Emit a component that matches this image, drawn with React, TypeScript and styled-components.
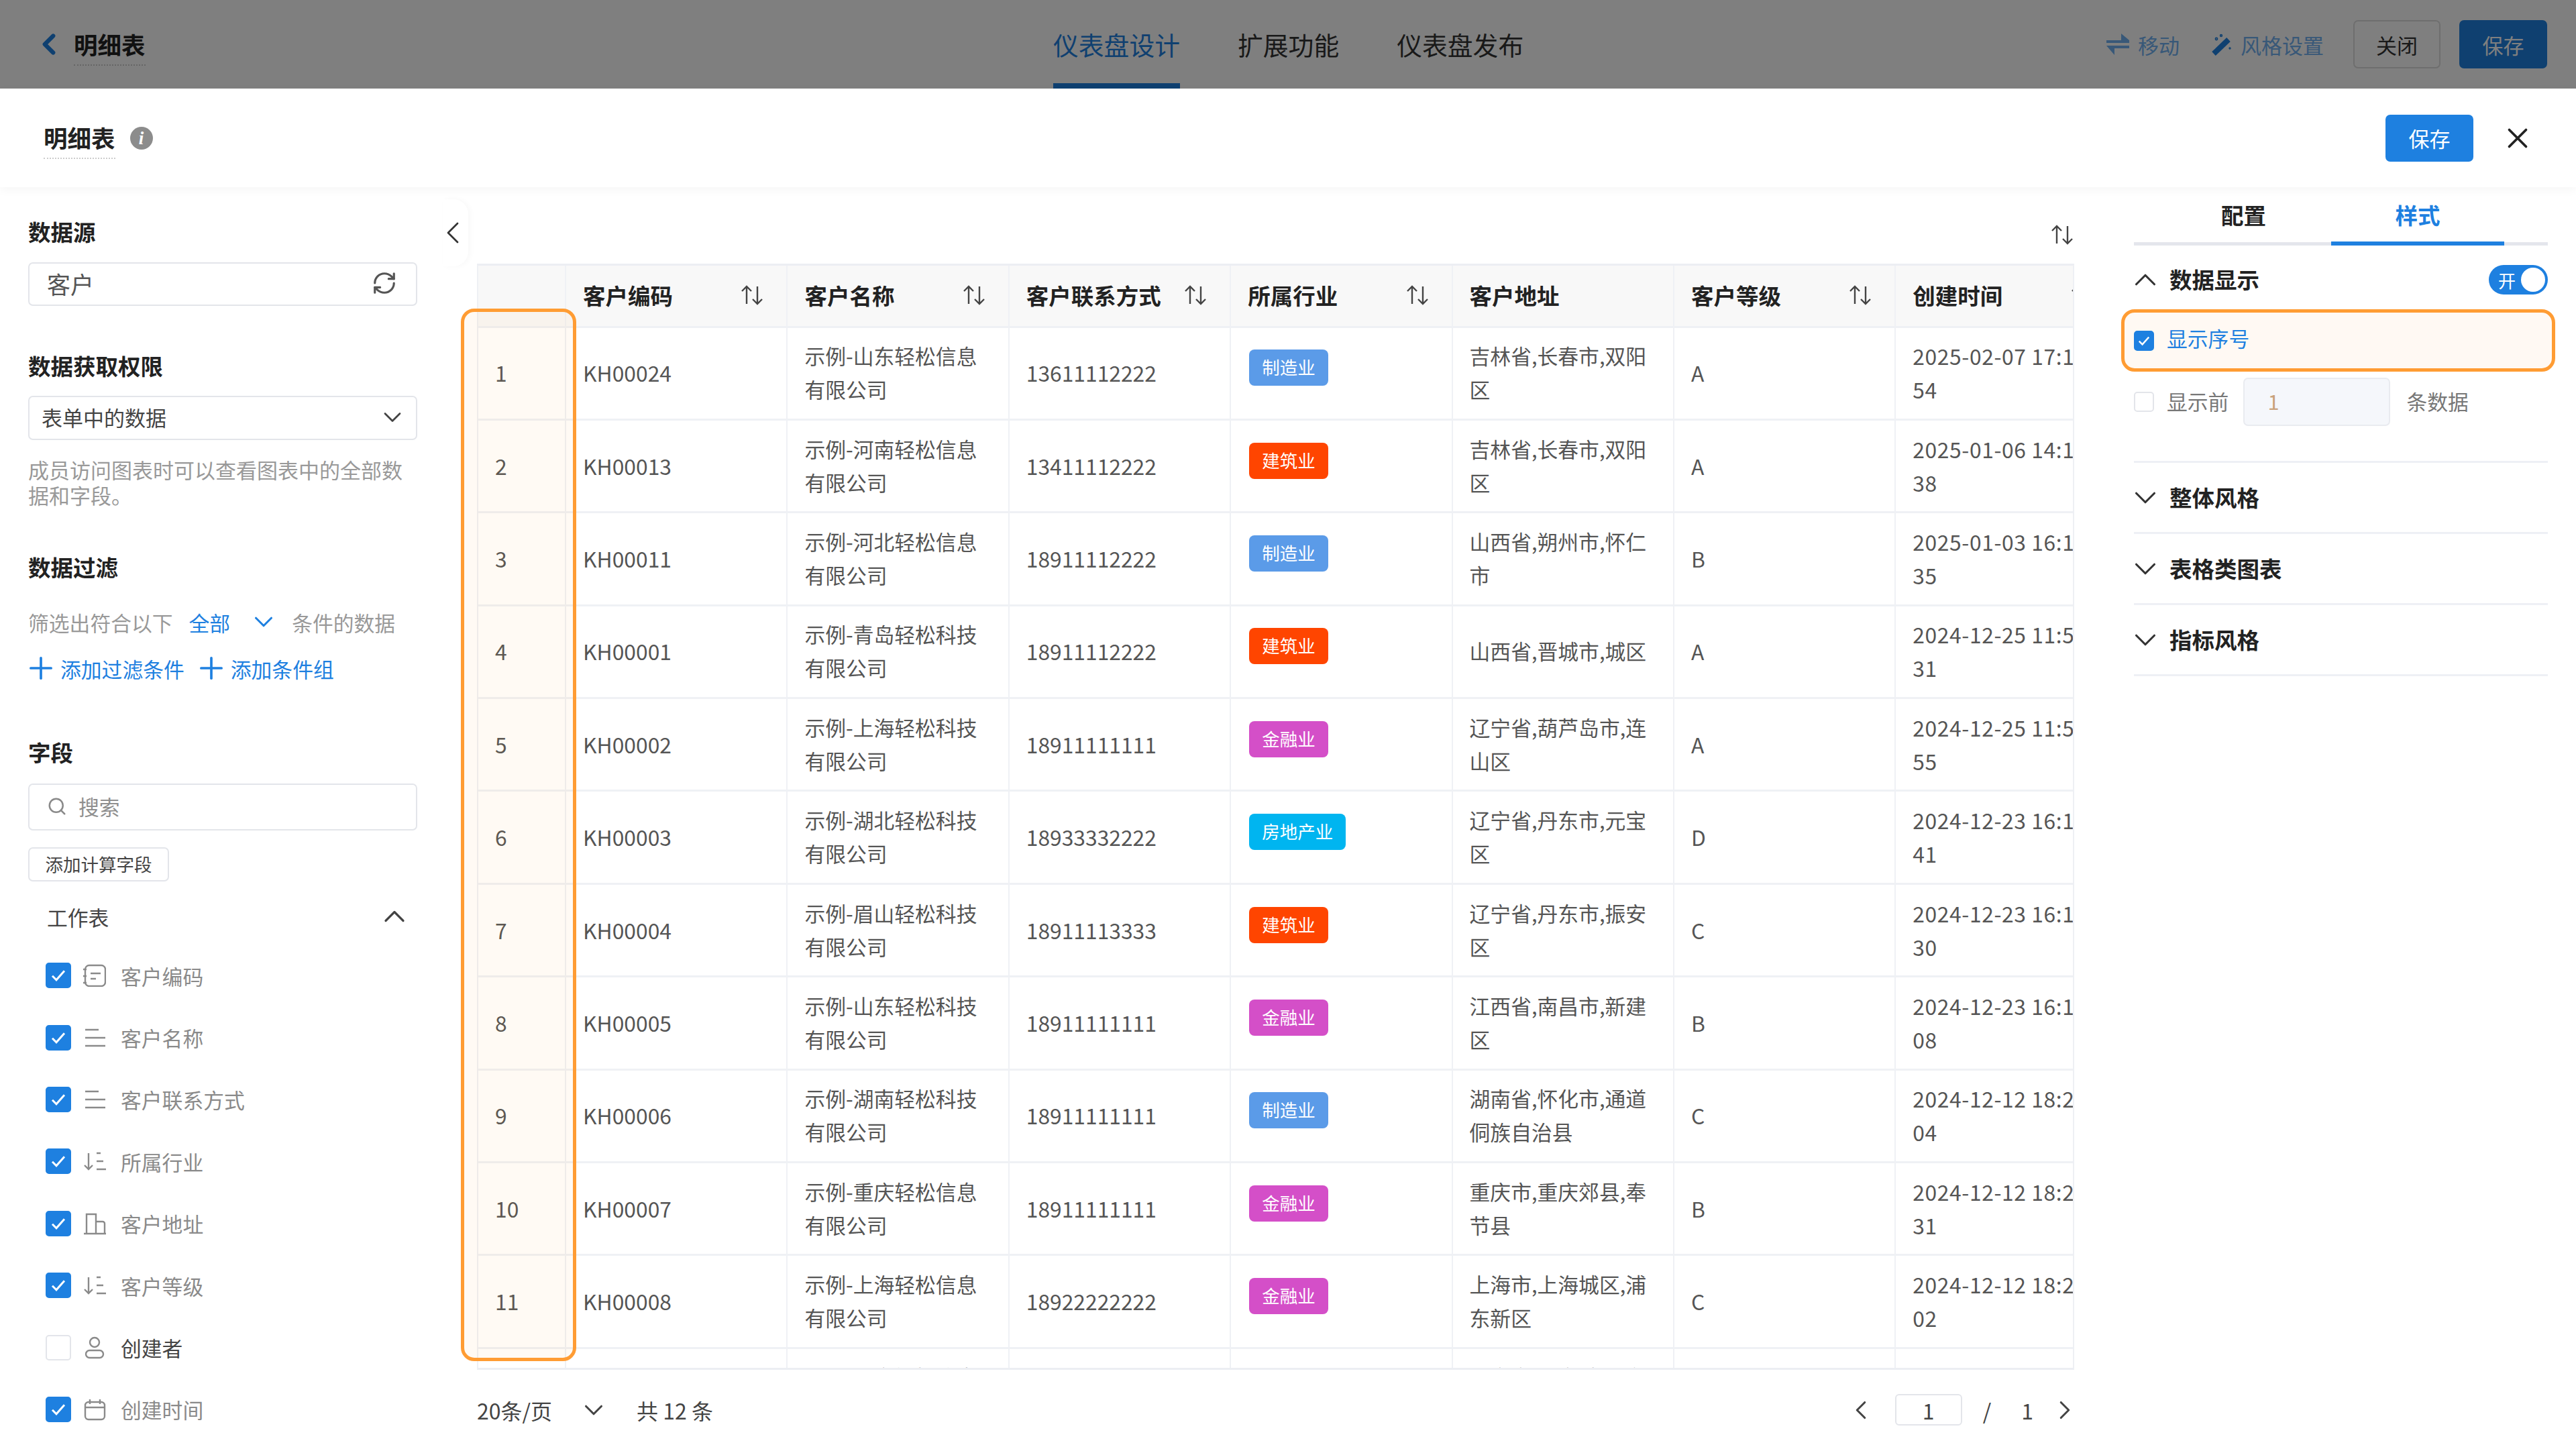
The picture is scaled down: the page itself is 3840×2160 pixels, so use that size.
import React from "react";
import styled, { createGlobalStyle } from "styled-components";
import {
  ChevronDown,
  ChevronLeft,
  ChevronRight,
  ChevronUp,
  Plus,
  RefreshCw,
  Search,
  X,
} from "lucide-react";

const GlobalStyle = createGlobalStyle`
  html, body {
    margin: 0;
    padding: 0;
    background: #fff;
  }
  * {
    box-sizing: border-box;
  }
  body {
    font-family: "Noto Sans CJK SC", "Noto Sans", sans-serif;
    color: #333;
  }
`;

const Page = styled.div`
  width: 3840px;
  height: 2160px;
  display: flex;
  flex-direction: column;
  overflow: hidden;
  background: #fff;
`;

/* top bar, dimmed by the modal's mask */
const TopBar = styled.header`
  position: relative;
  flex: none;
  height: 132px;
  display: flex;
  align-items: center;
  justify-content: space-between;
  padding: 0 43px 0 48px;
  background: #fff;

  &::after {
    content: "";
    position: absolute;
    inset: 0;
    background: rgba(0, 0, 0, 0.5);
    pointer-events: none;
  }
`;

const BackLink = styled.div`
  display: flex;
  align-items: center;
  gap: 12px;
  width: 600px;
  color: #1e80e0;
`;

const DottedTitle = styled.span`
  margin-top: 10px;
  font-size: 35.5px;
  font-weight: 700;
  line-height: 42px;
  color: #222;
  padding-bottom: 9px;
  border-bottom: 2px dotted #ccc;
`;

const Nav = styled.nav`
  display: flex;
  align-self: stretch;
  gap: 86px;
  margin-left: 922px;
`;

const NavItem = styled.div<{ $active?: boolean }>`
  display: flex;
  align-items: center;
  padding-bottom: 2px;
  font-size: 37.8px;
  color: ${(p) => (p.$active ? "#1e80e0" : "#333")};
  border-bottom: 8px solid ${(p) => (p.$active ? "#1e80e0" : "transparent")};
  border-top: 8px solid transparent;
`;

const BarActions = styled.div`
  display: flex;
  align-items: center;
  margin-left: auto;
`;

const BarLink = styled.div<{ $gap: number; $end: number }>`
  display: flex;
  align-items: center;
  gap: ${(p) => p.$gap}px;
  margin-right: ${(p) => p.$end}px;
  font-size: 31px;
  color: #70b0f0;
`;

const Button = styled.button<{ $primary?: boolean; $h: number }>`
  width: 131px;
  height: ${(p) => p.$h}px;
  margin: 0;
  padding: 0;
  border-radius: 7px;
  font-family: inherit;
  font-size: 31px;
  border: 2px solid ${(p) => (p.$primary ? "#1e80e0" : "#ddd")};
  background: ${(p) => (p.$primary ? "#1e80e0" : "#fff")};
  color: ${(p) => (p.$primary ? "#fff" : "#333")};
`;

const CloseButton = styled(Button)`
  width: 130px;
  margin-right: 28px;
`;

const Modal = styled.main`
  position: relative;
  flex: 1;
  min-height: 0;
  display: flex;
  flex-direction: column;
  background: #fff;
  border-radius: 18px 18px 0 0;
`;

const ModalHeader = styled.div`
  flex: none;
  height: 147px;
  display: flex;
  align-items: center;
  padding: 0 62px 0 65px;
  box-shadow: 0 4px 14px rgba(0, 0, 0, 0.04);
`;

const InfoBadge = styled.span`
  width: 34px;
  height: 34px;
  margin: 0 auto 0 22px;
  border-radius: 50%;
  background: #8c8c8c;
  color: #fff;
  font-family: "Liberation Serif", serif;
  font-style: italic;
  font-weight: 700;
  font-size: 27px;
  line-height: 34px;
  text-align: center;
`;

const HeaderClose = styled.div`
  display: flex;
  margin-left: 41px;
  color: #222;
`;

const Body = styled.div`
  position: relative;
  flex: 1;
  min-height: 0;
  display: flex;
`;

/* left column */
const LeftPanel = styled.aside`
  flex: none;
  width: 711px;
  padding: 44px 89px 0 42px;
`;

const SectionTitle = styled.h3<{ $top?: number }>`
  margin: ${(p) => p.$top ?? 0}px 0 0;
  font-size: 33.5px;
  font-weight: 700;
  line-height: 44px;
  color: #222;
`;

const Field = styled.div<{ $h: number; $top: number }>`
  height: ${(p) => p.$h}px;
  margin-top: ${(p) => p.$top}px;
  display: flex;
  align-items: center;
  border: 2px solid #e3e5ea;
  border-radius: 7px;
  color: #444;
`;

const SourceField = styled(Field)`
  justify-content: space-between;
  padding: 0 28px 3px 26px;
  font-size: 35px;
  color: #555;
`;

const SelectField = styled(Field)`
  justify-content: space-between;
  padding: 0 13px 3px 18px;
  font-size: 31px;
`;

const SearchField = styled(Field)`
  gap: 17px;
  padding: 0 0 3px 26px;
  font-size: 30.8px;
  color: #8f8f8f;
`;

const Hint = styled.p`
  margin: 25px 0 0;
  font-size: 31px;
  line-height: 38px;
  color: #999;
`;

const FilterRow = styled.div`
  height: 40px;
  margin-top: 40px;
  display: flex;
  align-items: center;
  font-size: 30.8px;
  color: #999;
`;

const FilterValue = styled.span`
  margin-left: 24px;
  color: #1e80e0;
`;

const FilterArrow = styled.span`
  display: flex;
  margin: 0 19px 0 27px;
  color: #1e80e0;
`;

const AddRow = styled.div`
  height: 40px;
  margin: 29px 0 0 -7px;
  display: flex;
  align-items: center;
  gap: 14px;
`;

const AddLink = styled.span`
  display: flex;
  align-items: center;
  gap: 3px;
  font-size: 30.8px;
  color: #1e80e0;
`;

const SmallButton = styled.div`
  width: 210px;
  height: 51px;
  margin-top: 25px;
  padding-bottom: 2px;
  display: flex;
  align-items: center;
  justify-content: center;
  border: 2px solid #e3e5ea;
  border-radius: 7px;
  font-size: 26.5px;
  color: #444;
`;

const SheetRow = styled.div`
  height: 44px;
  margin-top: 30px;
  padding: 0 8px 0 28px;
  display: flex;
  align-items: center;
  justify-content: space-between;
  font-size: 30.8px;
  color: #444;
`;

const FieldList = styled.ul`
  list-style: none;
  margin: 20px 0 0;
  padding: 0 0 0 26px;
`;

const FieldRow = styled.li<{ $on: boolean }>`
  height: 92.4px;
  display: flex;
  align-items: center;
  font-size: 30.8px;
  color: ${(p) => (p.$on ? "#8a8a8a" : "#444")};
`;

const FieldIcon = styled.svg`
  width: 34px;
  height: 34px;
  margin: 0 22px 0 18px;
  fill: none;
  stroke: #8a8a8a;
  stroke-width: 2.4;
`;

const Check = styled.span<{ $on: boolean; $size: number }>`
  flex: none;
  width: ${(p) => p.$size}px;
  height: ${(p) => p.$size}px;
  display: flex;
  align-items: center;
  justify-content: center;
  border-radius: 5px;
  border: 2px solid ${(p) => (p.$on ? "#1e80e0" : "#e3e5ea")};
  background: ${(p) => (p.$on ? "#1e80e0" : "#fff")};
`;

const CollapseHandle = styled.div`
  position: absolute;
  left: 661px;
  top: 18px;
  width: 37px;
  height: 100px;
  display: flex;
  align-items: center;
  justify-content: center;
  color: #333;
  background: #fff;
  border-radius: 0 22px 22px 0;
  box-shadow: 3px 0 8px rgba(0, 0, 0, 0.03);

  svg {
    flex: none;
    margin-right: 9px;
  }
`;

/* table column */
const Center = styled.section`
  position: relative;
  flex: none;
  width: 2381px;
  display: flex;
  flex-direction: column;
`;

const TableTools = styled.div`
  flex: none;
  height: 114px;
  padding: 28px 2px 0 0;
  display: flex;
  align-items: center;
  justify-content: flex-end;
`;

const TableFrame = styled.div`
  flex: none;
  height: 1649px;
  overflow: hidden;
  border-top: 3px solid #eceef3;
  border-bottom: 3px solid #eceef3;
  border-left: 2px solid #eef0f4;
  border-right: 2px solid #eef0f4;
`;

const TableRow = styled.div<{ $head?: boolean }>`
  display: grid;
  grid-template-columns: 131px repeat(7, 330.4px);
  height: ${(p) => (p.$head ? "92.5px" : "138.4px")};
  background: ${(p) => (p.$head ? "#f8f8f8" : "#fff")};
  border-bottom: 3px solid #eff1f5;
`;

const Cell = styled.div<{ $kind?: "text" | "date" }>`
  min-width: 0;
  display: flex;
  flex-direction: column;
  justify-content: center;
  align-items: flex-start;
  padding: 0 25px 2px;
  font-size: ${(p) => (p.$kind === "text" ? "30.8px" : "31.8px")};
  letter-spacing: ${(p) => (p.$kind === "date" ? "0.6px" : "0")};
  line-height: 50px;
  color: #555;
  word-break: break-all;
  border-right: 2px solid #eff1f5;
`;

const HeadCell = styled(Cell)`
  flex-direction: row;
  align-items: center;
  justify-content: space-between;
  padding: 0 35px 2px 25px;
  font-size: 33.5px;
  font-weight: 700;
  color: #222;
  white-space: nowrap;
`;

const Tag = styled.span<{ $color: string }>`
  height: 54px;
  margin: 0 0 14px 2px;
  padding: 0 19px 2px;
  display: flex;
  align-items: center;
  border-radius: 8px;
  font-size: 26.5px;
  color: #fff;
  background: ${(p) => p.$color};
  white-space: nowrap;
`;

const ColumnHighlight = styled.div`
  position: absolute;
  left: -24px;
  top: 181px;
  width: 172px;
  height: 1569px;
  border: 5px solid #ff9c33;
  border-radius: 20px;
  background: rgba(255, 150, 40, 0.05);
  pointer-events: none;
`;

const Pager = styled.footer`
  flex: 1;
  display: flex;
  align-items: center;
  padding-top: 1px;
  font-size: 32px;
  color: #444;
`;

const PageSize = styled.span`
  display: flex;
  align-items: center;
  gap: 39px;
  margin-right: 41px;
`;

const PagerRight = styled.div`
  margin-left: auto;
  margin-right: -9px;
  display: flex;
  align-items: center;
  color: #444;
`;

const PageInput = styled.div`
  width: 100px;
  height: 47px;
  margin: 0 31px 0 28px;
  display: flex;
  align-items: center;
  justify-content: center;
  border: 2px solid #e3e5ea;
  border-radius: 6px;
`;

const PageTotal = styled.span`
  margin: 0 24px 0 45px;
`;

/* right column */
const RightPanel = styled.aside`
  flex: none;
  width: 748px;
  padding: 0 42px 0 89px;
`;

const Tabs = styled.div`
  height: 87px;
  display: flex;
  padding-left: 33px;
  border-bottom: 5px solid #e4e6ec;
`;

const Tab = styled.div<{ $active?: boolean; $w: number }>`
  width: ${(p) => p.$w}px;
  margin-bottom: -5px;
  display: flex;
  align-items: center;
  justify-content: center;
  font-size: 33.5px;
  font-weight: 700;
  color: ${(p) => (p.$active ? "#1e80e0" : "#222")};
  border-bottom: 6px solid ${(p) => (p.$active ? "#1e80e0" : "transparent")};
`;

const SectionHead = styled.div`
  height: 44px;
  margin-top: 29px;
  display: flex;
  align-items: center;

  svg {
    flex: none;
    margin-left: -10px;
  }
`;

const SectionName = styled.span`
  margin: 0 0 3px 9px;
  font-size: 33.5px;
  font-weight: 700;
  color: #222;
`;

const Toggle = styled.div`
  width: 88px;
  height: 44px;
  margin-left: auto;
  padding: 0 4px 0 14px;
  display: flex;
  align-items: center;
  justify-content: space-between;
  border-radius: 22px;
  background: #1e80e0;
  font-size: 26px;
  color: #fff;

  &::after {
    content: "";
    width: 36px;
    height: 36px;
    border-radius: 50%;
    background: #fff;
  }
`;

const OptionHighlight = styled.div`
  height: 93px;
  margin: 22px -11px 0 -19px;
  padding: 0 0 0 14px;
  display: flex;
  align-items: center;
  gap: 19px;
  border: 5px solid #ff9c33;
  border-radius: 20px;
  background: #fff9f3;
  font-size: 30.8px;
  line-height: 36px;
  color: #1e80e0;

  span:last-child {
    margin-bottom: 7px;
  }
`;

const OptionRow = styled.div`
  height: 72px;
  margin-top: 9px;
  display: flex;
  align-items: center;
  gap: 19px;
  font-size: 30.8px;
  color: #777;
`;

const OptionLabel = styled.span`
  margin-bottom: 3px;
`;

const CountInput = styled.div`
  width: 219px;
  height: 72px;
  margin: 0 5px 0 3px;
  padding: 0 0 3px 34px;
  display: flex;
  align-items: center;
  border: 2px solid #e9ebf0;
  border-radius: 7px;
  background: #f5f7fb;
  color: #c9a27c;
`;

const Rule = styled.div`
  height: 55px;
  border-bottom: 3px solid #eef0f5;
`;

const CollapsedSection = styled.div`
  height: 106px;
  display: flex;
  align-items: center;
  border-bottom: 3px solid #eef0f5;

  svg {
    flex: none;
    margin-left: -10px;
  }
`;

const Sort = () => (
  <svg
    width="32"
    height="32"
    viewBox="0 0 32 32"
    fill="none"
    stroke="#444"
    strokeWidth="2.4"
    style={{ flex: "none" }}
  >
    <path d="M8 29V3M1 10l7-7 7 7" />
    <path d="M24 3v26M17 22l7 7 7-7" />
  </svg>
);

const Tick = ({ size }: { size: number }) => (
  <svg width={size} height={size} viewBox="0 0 20 20" fill="none" stroke="#fff" strokeWidth="2">
    <path d="M4 10.5l4 4 8-9" />
  </svg>
);

const icons: Record<string, React.ReactNode> = {
  note: (
    <>
      <rect x="3" y="2" width="30" height="31" rx="6" />
      <path d="M11 14h15M11 22h8M0 8h5M0 18h5M0 28h5" />
    </>
  ),
  lines: <path d="M3 5h20M3 17h30M3 29h30" />,
  sort: <path d="M8 5v24M2 23l6 6 6-6M20 5h6M20 17h10M20 29h14" />,
  building: <path d="M1 32h33M5 32V3h14v29M19 14h10a3 3 0 0 1 3 3v15" />,
  user: (
    <>
      <circle cx="17" cy="9" r="7" />
      <rect x="4" y="21" width="26" height="11" rx="5.5" />
    </>
  ),
  date: (
    <>
      <rect x="3" y="6" width="29" height="26" rx="5" />
      <path d="M3 14h29M10 2v7M25 2v7" />
    </>
  ),
};

const fieldRows = [
  { name: "客户编码", icon: "note", on: true },
  { name: "客户名称", icon: "lines", on: true },
  { name: "客户联系方式", icon: "lines", on: true },
  { name: "所属行业", icon: "sort", on: true },
  { name: "客户地址", icon: "building", on: true },
  { name: "客户等级", icon: "sort", on: true },
  { name: "创建者", icon: "user", on: false },
  { name: "创建时间", icon: "date", on: true },
];

const tagColors: Record<string, string> = {
  制造业: "#5b9be8",
  建筑业: "#ff4500",
  金融业: "#d44fc8",
  房地产业: "#00b5f0",
};

const rows = [
  ["KH00024", "示例-山东轻松信息有限公司", "13611112222", "制造业", "吉林省,长春市,双阳区", "A", "2025-02-07 17:18:54"],
  ["KH00013", "示例-河南轻松信息有限公司", "13411112222", "建筑业", "吉林省,长春市,双阳区", "A", "2025-01-06 14:12:38"],
  ["KH00011", "示例-河北轻松信息有限公司", "18911112222", "制造业", "山西省,朔州市,怀仁市", "B", "2025-01-03 16:16:35"],
  ["KH00001", "示例-青岛轻松科技有限公司", "18911112222", "建筑业", "山西省,晋城市,城区", "A", "2024-12-25 11:50:31"],
  ["KH00002", "示例-上海轻松科技有限公司", "18911111111", "金融业", "辽宁省,葫芦岛市,连山区", "A", "2024-12-25 11:50:55"],
  ["KH00003", "示例-湖北轻松科技有限公司", "18933332222", "房地产业", "辽宁省,丹东市,元宝区", "D", "2024-12-23 16:10:41"],
  ["KH00004", "示例-眉山轻松科技有限公司", "18911113333", "建筑业", "辽宁省,丹东市,振安区", "C", "2024-12-23 16:10:30"],
  ["KH00005", "示例-山东轻松科技有限公司", "18911111111", "金融业", "江西省,南昌市,新建区", "B", "2024-12-23 16:10:08"],
  ["KH00006", "示例-湖南轻松科技有限公司", "18911111111", "制造业", "湖南省,怀化市,通道侗族自治县", "C", "2024-12-12 18:20:04"],
  ["KH00007", "示例-重庆轻松信息有限公司", "18911111111", "金融业", "重庆市,重庆郊县,奉节县", "B", "2024-12-12 18:20:31"],
  ["KH00008", "示例-上海轻松信息有限公司", "18922222222", "金融业", "上海市,上海城区,浦东新区", "C", "2024-12-12 18:20:02"],
  ["KH00009", "示例-北京轻松信息有限公司", "18911111111", "金融业", "北京市,北京城区,东城区", "B", "2024-12-12 18:20:01"],
];

const columns = [
  { title: "客户编码", sortable: true },
  { title: "客户名称", sortable: true },
  { title: "客户联系方式", sortable: true },
  { title: "所属行业", sortable: true },
  { title: "客户地址", sortable: false },
  { title: "客户等级", sortable: true },
  { title: "创建时间", sortable: true },
];

const App = () => (
  <Page>
    <GlobalStyle />
    <TopBar>
      <BackLink>
        <ChevronLeft size={50} strokeWidth={3} />
        <DottedTitle>明细表</DottedTitle>
      </BackLink>
      <Nav>
        <NavItem $active>仪表盘设计</NavItem>
        <NavItem>扩展功能</NavItem>
        <NavItem>仪表盘发布</NavItem>
      </Nav>
      <BarActions>
        <BarLink $gap={13} $end={47}>
          <svg width="34" height="32" viewBox="0 0 34 32" fill="#70b0f0">
            <path d="M0 10h22V0l12 10v4H0zM0 18h34v4H12v10z" />
          </svg>
          移动
        </BarLink>
        <BarLink $gap={14} $end={44}>
          <svg width="30" height="36" viewBox="0 0 30 36" fill="none" stroke="#1e80e0">
            <path d="M4 32L26 11" strokeWidth="8" />
            <circle cx="8" cy="10" r="1.6" strokeWidth="1.6" />
            <circle cx="15" cy="5" r="1.4" strokeWidth="1.6" />
            <circle cx="28" cy="24" r="1" strokeWidth="1.4" />
          </svg>
          风格设置
        </BarLink>
        <CloseButton $h={72}>关闭</CloseButton>
        <Button $primary $h={72}>
          保存
        </Button>
      </BarActions>
    </TopBar>

    <Modal>
      <ModalHeader>
        <DottedTitle>明细表</DottedTitle>
        <InfoBadge>i</InfoBadge>
        <Button $primary $h={70}>
          保存
        </Button>
        <HeaderClose>
          <X size={50} strokeWidth={1.8} />
        </HeaderClose>
      </ModalHeader>

      <Body>
        <LeftPanel>
          <SectionTitle>数据源</SectionTitle>
          <SourceField $h={65} $top={24}>
            客户
            <RefreshCw size={38} strokeWidth={2} />
          </SourceField>

          <SectionTitle $top={67}>数据获取权限</SectionTitle>
          <SelectField $h={66} $top={23}>
            表单中的数据
            <ChevronDown size={44} strokeWidth={1.5} />
          </SelectField>
          <Hint>成员访问图表时可以查看图表中的全部数据和字段。</Hint>

          <SectionTitle $top={66}>数据过滤</SectionTitle>
          <FilterRow>
            筛选出符合以下
            <FilterValue>全部</FilterValue>
            <FilterArrow>
              <ChevronDown size={46} strokeWidth={1.6} />
            </FilterArrow>
            条件的数据
          </FilterRow>
          <AddRow>
            <AddLink>
              <Plus size={52} strokeWidth={1.7} />
              添加过滤条件
            </AddLink>
            <AddLink>
              <Plus size={52} strokeWidth={1.7} />
              添加条件组
            </AddLink>
          </AddRow>

          <SectionTitle $top={83}>字段</SectionTitle>
          <SearchField $h={70} $top={25}>
            <Search size={30} strokeWidth={2} color="#8a8a8a" />
            搜索
          </SearchField>
          <SmallButton>添加计算字段</SmallButton>
          <SheetRow>
            工作表
            <ChevronUp size={52} strokeWidth={1.5} />
          </SheetRow>
          <FieldList>
            {fieldRows.map((f) => (
              <FieldRow key={f.name} $on={f.on}>
                <Check $on={f.on} $size={38}>
                  {f.on && <Tick size={30} />}
                </Check>
                <FieldIcon viewBox="0 0 34 34">{icons[f.icon]}</FieldIcon>
                {f.name}
              </FieldRow>
            ))}
          </FieldList>
        </LeftPanel>
        <CollapseHandle>
          <ChevronLeft size={56} strokeWidth={1.2} />
        </CollapseHandle>

        <Center>
          <TableTools>
            <Sort />
          </TableTools>
          <TableFrame>
            <TableRow $head>
              <HeadCell />
              {columns.map((c) => (
                <HeadCell key={c.title}>
                  {c.title}
                  {c.sortable && <Sort />}
                </HeadCell>
              ))}
            </TableRow>
            {rows.map((r, i) => (
              <TableRow key={r[0]}>
                <Cell>{i < 11 ? i + 1 : ""}</Cell>
                <Cell>{r[0]}</Cell>
                <Cell $kind="text">{r[1]}</Cell>
                <Cell>{r[2]}</Cell>
                <Cell>
                  <Tag $color={tagColors[r[3]]}>{r[3]}</Tag>
                </Cell>
                <Cell $kind="text">{r[4]}</Cell>
                <Cell>{r[5]}</Cell>
                <Cell $kind="date">{r[6]}</Cell>
              </TableRow>
            ))}
          </TableFrame>
          <Pager>
            <PageSize>
              20条/页
              <ChevronDown size={46} strokeWidth={1.6} />
            </PageSize>
            共 12 条
            <PagerRight>
              <ChevronLeft size={46} strokeWidth={1.6} />
              <PageInput>1</PageInput>
              /
              <PageTotal>1</PageTotal>
              <ChevronRight size={46} strokeWidth={1.6} />
            </PagerRight>
          </Pager>
          <ColumnHighlight />
        </Center>

        <RightPanel>
          <Tabs>
            <Tab $w={261}>配置</Tab>
            <Tab $w={258} $active>
              样式
            </Tab>
          </Tabs>
          <SectionHead>
            <ChevronUp size={54} strokeWidth={1.4} />
            <SectionName>数据显示</SectionName>
            <Toggle>开</Toggle>
          </SectionHead>
          <OptionHighlight>
            <Check $on $size={30}>
              <Tick size={24} />
            </Check>
            <span>显示序号</span>
          </OptionHighlight>
          <OptionRow>
            <Check $on={false} $size={30} />
            <OptionLabel>显示前</OptionLabel>
            <CountInput>1</CountInput>
            <OptionLabel>条数据</OptionLabel>
          </OptionRow>
          <Rule />
          {["整体风格", "表格类图表", "指标风格"].map((s) => (
            <CollapsedSection key={s}>
              <ChevronDown size={54} strokeWidth={1.4} />
              <SectionName>{s}</SectionName>
            </CollapsedSection>
          ))}
        </RightPanel>
      </Body>
    </Modal>
  </Page>
);

export default App;
